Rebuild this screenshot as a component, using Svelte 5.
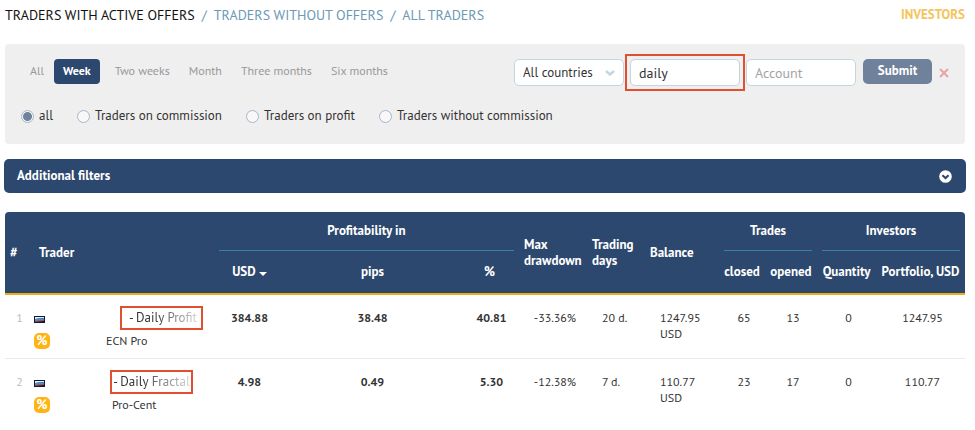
<script>
  const sections = [
    { label: 'TRADERS WITH ACTIVE OFFERS', current: true },
    { label: 'TRADERS WITHOUT OFFERS' },
    { label: 'ALL TRADERS' }
  ];
  const periods = ['All', 'Week', 'Two weeks', 'Month', 'Three months', 'Six months'];
  const offers = ['all', 'Traders on commission', 'Traders on profit', 'Traders without commission'];
  const traders = [
    { n: 1, hidden: 76, inset: 3, name: '- Daily Profit', accountIndent: 56, account: 'ECN Pro', usd: '384.88', pips: '38.48', pct: '40.81', drawdown: '-33.36%', days: '20 d.', balance: '1247.95', closed: 65, opened: 13, quantity: 0, portfolio: '1247.95' },
    { n: 2, hidden: 66, inset: 0, name: '- Daily Fractal', accountIndent: 62, account: 'Pro-Cent', usd: '4.98', pips: '0.49', pct: '5.30', drawdown: '-12.38%', days: '7 d.', balance: '110.77', closed: 23, opened: 17, quantity: 0, portfolio: '110.77' }
  ];
  let period = $state('Week');
  let offer = $state('all');
  let nickname = $state('daily');
</script>

<main>
  <nav class="top">
    <div class="sections">
      {#each sections as s, i}
        {#if i > 0}<span class="slash">/</span>{/if}
        <a href="#section" class:current={s.current}>{s.label}</a>
      {/each}
    </div>
    <a href="#investors" class="investors">INVESTORS</a>
  </nav>

  <form class="panel" onsubmit={(e) => e.preventDefault()}>
    <div class="controls">
      <div class="periods">
        {#each periods as p}
          <button type="button" class="period" class:active={p === period} onclick={() => (period = p)}>{p}</button>
        {/each}
      </div>
      <div class="search">
        <div class="select">
          <select aria-label="Country"><option>All countries</option></select>
          <svg width="10" height="6" viewBox="0 0 10 6" aria-hidden="true"><path d="M1 1l4 3.5L9 1" fill="none" stroke="#c3d5de" stroke-width="2.4" /></svg>
        </div>
        <div class="marked"><input class="field" type="text" aria-label="Nickname" bind:value={nickname} /></div>
        <input class="field" type="text" aria-label="Account" placeholder="Account" />
        <button class="submit" type="submit">Submit</button>
        <button class="clear" type="button" aria-label="Clear">
          <svg width="10" height="10" viewBox="0 0 10 10" aria-hidden="true"><path d="M1 1l8 8M9 1l-8 8" stroke="#e9a3a3" stroke-width="2" /></svg>
        </button>
      </div>
    </div>
    <div class="offers">
      {#each offers as o}
        <label><input type="radio" name="offer" value={o} bind:group={offer} />{o}</label>
      {/each}
    </div>
  </form>

  <button class="more" type="button">
    Additional filters
    <svg width="13" height="13" viewBox="0 0 13 13" aria-hidden="true"><circle cx="6.5" cy="6.5" r="6.3" fill="#fff" /><path d="M3.4 5.2l3.1 2.9 3.1-2.9" fill="none" stroke="#2d486e" stroke-width="2" /></svg>
  </button>

  <table>
    <colgroup>
      <col class="c-num" /><col /><col class="c-usd" /><col class="c-pips" /><col class="c-pct" />
      <col class="c-draw" /><col class="c-days" /><col class="c-bal" /><col class="c-closed" />
      <col class="c-opened" /><col class="c-qty" /><col class="c-port" />
    </colgroup>
    <thead>
      <tr>
        <th rowspan="2" class="left">#</th>
        <th rowspan="2" class="left">Trader</th>
        <th colspan="3" class="group"><div>Profitability in</div></th>
        <th rowspan="2" class="left">Max drawdown</th>
        <th rowspan="2" class="left">Trading days</th>
        <th rowspan="2" class="left">Balance</th>
        <th colspan="2" class="group"><div>Trades</div></th>
        <th colspan="2" class="group"><div>Investors</div></th>
      </tr>
      <tr class="sub">
        <th class="sorted">USD <svg width="8" height="4" viewBox="0 0 8 4" aria-hidden="true"><path d="M0 0h8L4 4z" fill="#fff" /></svg></th>
        <th>pips</th>
        <th>%</th>
        <th>closed</th>
        <th>opened</th>
        <th>Quantity</th>
        <th>Portfolio, USD</th>
      </tr>
    </thead>
    <tbody>
      {#each traders as t}
        <tr>
          <td class="num">{t.n}</td>
          <td class="trader">
            <div class="line">
              <svg class="flag" width="11" height="7" viewBox="0 0 11 7" role="img" aria-label="Russia">
                <rect width="11" height="7" fill="#141a24" /><path d="M1 1h9v1L1 3z" fill="#e8eef5" />
                <path d="M1 3l9-1v3L1 5z" fill="#4a8ad0" /><path d="M1 5l9-1v1L1 6z" fill="#a5485a" />
              </svg>
              <span class="name" style:margin-left="{t.hidden}px" style:padding-left="{t.inset}px"><span class="fade">{t.name}</span></span>
            </div>
            <div class="line">
              <span class="badge">%</span>
              <span style:margin-left="{t.accountIndent}px">{t.account}</span>
            </div>
          </td>
          <td class="strong">{t.usd}</td>
          <td class="strong">{t.pips}</td>
          <td class="strong shift">{t.pct}</td>
          <td class="shift">{t.drawdown}</td>
          <td class="indent">{t.days}</td>
          <td class="indent">{t.balance}<br />USD</td>
          <td class="shift">{t.closed}</td>
          <td class="shift">{t.opened}</td>
          <td class="shift">{t.quantity}</td>
          <td class="shift">{t.portfolio}</td>
        </tr>
      {/each}
    </tbody>
  </table>
</main>

<style>
  :global(body) { margin: 0; background: #fff; }
  main {
    padding: 5px 10px 0 5px;
    font: 12px/16px 'PT Sans', 'Noto Sans', sans-serif;
    color: #333;
  }
  a { text-decoration: none; color: #6c99b5; }
  button, input, select { font: inherit; color: inherit; margin: 0; box-sizing: border-box; }
  button { border: 0; padding: 0; background: none; cursor: pointer; }
  svg { display: block; flex: none; }

  .top { display: flex; justify-content: space-between; font-size: 14px; line-height: 20px; }
  .sections { display: flex; gap: 7px; }
  .slash { color: #6c99b5; }
  .top .current { color: #111; }
  .investors { color: #f3c55c; font-size: 13px; font-weight: 600; }

  .panel { margin-top: 19px; padding: 15px 16px 20px; background: #efefef; border-radius: 4px; }
  .controls { display: flex; justify-content: space-between; align-items: flex-start; }
  .periods { display: flex; gap: 1px; }
  .period { height: 25px; padding: 0 9px 2px; border-radius: 4px; color: #999; }
  .period.active { margin-right: 5px; background: #2d486e; color: #fff; font-weight: 600; }
  .search { display: flex; gap: 6px; font-size: 13px; }
  .select { position: relative; }
  .select select, .field {
    display: block; width: 110px; height: 27px; padding: 0 8px;
    border: 1px solid #c3d5de; border-radius: 5px; background: #fff; appearance: none;
  }
  .field { font-size: 14px; }
  .select svg { position: absolute; right: 9px; top: 11px; pointer-events: none; }
  .field::placeholder { color: #a3a3a3; opacity: 1; }
  .marked { outline: 2px solid #e04f30; outline-offset: 3px; }
  .submit { width: 69px; height: 25px; margin-left: 1px; padding-bottom: 2px; border-radius: 5px; background: #70819b; color: #fff; font-weight: 600; }
  .clear { height: 27px; margin-left: 1px; }
  .offers { display: flex; gap: 24px; margin-top: 22px; font-size: 13px; }
  .offers label { display: flex; align-items: center; gap: 5px; }
  .offers input { appearance: none; width: 13px; height: 13px; border: 1px solid #a9b5c8; border-radius: 50%; background: #f8f8f8; }
  .offers input:checked { background: radial-gradient(circle, #70819b 4px, #f8f8f8 5px); }

  .more {
    display: flex; justify-content: space-between; align-items: center;
    width: calc(100% + 2px); height: 34px; margin: 15px -1px 19px; padding: 0 14px 0 13px;
    border-radius: 5px; background: #2d486e; color: #fff; font-size: 13px; font-weight: 600;
  }

  table { width: 100%; table-layout: fixed; border-collapse: separate; border-spacing: 0; }
  .c-num { width: 29px; }
  .c-usd { width: 71px; }
  .c-pips { width: 175px; }
  .c-pct { width: 59px; }
  .c-draw { width: 68px; }
  .c-days { width: 58px; }
  .c-bal { width: 74px; }
  .c-closed { width: 46px; }
  .c-opened { width: 52px; }
  .c-qty { width: 59px; }
  .c-port { width: 89px; }

  th { padding: 0; background: #2d486e; color: #fff; font-size: 13px; font-weight: 600; }
  th.left { padding: 0 5px; text-align: left; border-bottom: 2px solid #efaf12; }
  th.group { padding: 0 5px; }
  th.group div { padding: 11px 0; border-bottom: 1px solid #3a7fa8; }
  .sub th { height: 42px; border-bottom: 2px solid #efaf12; white-space: nowrap; }
  .sorted svg { display: inline-block; }
  th:first-child { border-top-left-radius: 4px; }
  tr:first-child th:last-child { border-top-right-radius: 4px; }
  .sub th:first-child { border-top-left-radius: 0; }

  td { padding: 15px 0 9px; border-bottom: 1px solid #e5ecf1; text-align: center; vertical-align: top; }
  tbody tr:last-child td { border-bottom-color: transparent; }
  .num { color: #bbb; }
  .strong { font-weight: 600; }
  .shift { padding-left: 4px; }
  .indent { padding-left: 15px; text-align: left; }
  .line { display: flex; align-items: center; height: 16px; white-space: nowrap; }
  .line + .line { margin-top: 7px; }
  .flag { margin-top: 2px; }
  .name { box-sizing: border-box; width: 81px; padding: 3px 0; outline: 2px solid #e04f30; outline-offset: -1px; font-size: 13px; }
  .fade { mask-image: linear-gradient(90deg, #000 35%, rgba(0, 0, 0, 0.2)); }
  .badge { width: 16px; height: 16px; border-radius: 5px; background: #ffb414; color: #fff; font-size: 13px; font-weight: 700; text-align: center; }
</style>
